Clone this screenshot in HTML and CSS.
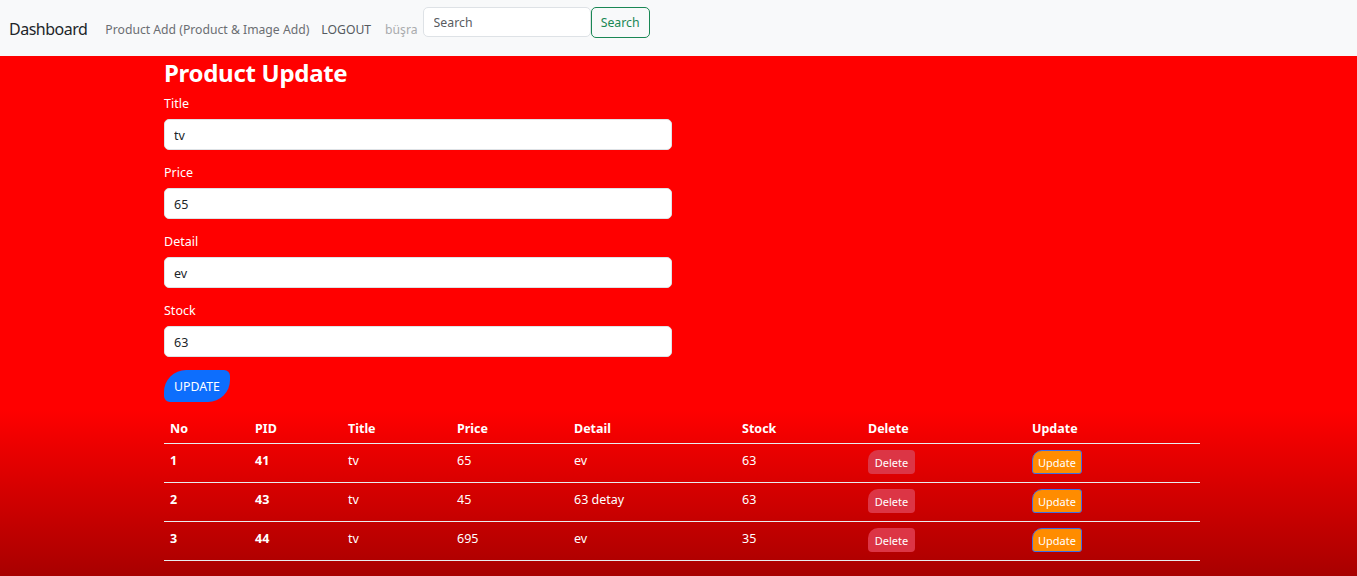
FILE: index.html
```html
<!DOCTYPE html>
<html lang="tr">
<head>
<meta charset="utf-8">
<title>Product Update</title>
<link rel="stylesheet" href="styles.css">
</head>
<body>
<nav class="navbar">
  <a class="brand" href="#">Dashboard</a>
  <a class="nav-link" href="#">Product Add (Product &amp; Image Add)</a>
  <a class="nav-link dark" href="#">LOGOUT</a>
  <span class="nav-link disabled">büşra</span>
  <form class="search">
    <input class="search-input" type="text" placeholder="Search">
    <button class="search-btn" type="button">Search</button>
  </form>
</nav>
<main class="main">
  <div class="container">
    <h2 class="page-title">Product Update</h2>
    <form class="form">
      <div class="group">
        <label class="label">Title</label>
        <input class="field" type="text" value="tv">
      </div>
      <div class="group">
        <label class="label">Price</label>
        <input class="field" type="text" value="65">
      </div>
      <div class="group">
        <label class="label">Detail</label>
        <input class="field" type="text" value="ev">
      </div>
      <div class="group">
        <label class="label">Stock</label>
        <input class="field" type="text" value="63">
      </div>
      <button class="btn-update-main" type="button">UPDATE</button>
    </form>
    <table class="table">
      <colgroup>
        <col class="c-no"><col class="c-pid"><col class="c-title"><col class="c-price">
        <col class="c-detail"><col class="c-stock"><col class="c-delete"><col class="c-update">
      </colgroup>
      <thead>
        <tr><th>No</th><th>PID</th><th>Title</th><th>Price</th><th>Detail</th><th>Stock</th><th>Delete</th><th>Update</th></tr>
      </thead>
      <tbody>
        <tr><th>1</th><th>41</th><td>tv</td><td>65</td><td>ev</td><td>63</td><td><button class="btn-del" type="button">Delete</button></td><td><button class="btn-upd" type="button">Update</button></td></tr>
        <tr><th>2</th><th>43</th><td>tv</td><td>45</td><td>63 detay</td><td>63</td><td><button class="btn-del" type="button">Delete</button></td><td><button class="btn-upd" type="button">Update</button></td></tr>
        <tr><th>3</th><th>44</th><td>tv</td><td>695</td><td>ev</td><td>35</td><td><button class="btn-del" type="button">Delete</button></td><td><button class="btn-upd" type="button">Update</button></td></tr>
      </tbody>
    </table>
  </div>
</main>
</body>
</html>
```
FILE: styles.css
```css
* { box-sizing: border-box; }
html, body { margin: 0; padding: 0; height: 100%; }
body {
  font-family: "Noto Sans", "Open Sans", "DejaVu Sans", sans-serif;
  font-size: 13px;
  color: #212529;
  display: flex;
  flex-direction: column;
  overflow: hidden;
}
.navbar {
  height: 56px;
  flex: 0 0 56px;
  background: #f8f9fa;
  display: flex;
  align-items: center;
  padding-left: 9px;
}
.brand {
  font-size: 16px;
  letter-spacing: -0.5px;
  color: #212529;
  text-decoration: none;
  margin-right: 18px;
  margin-top: 1px;
}
.nav-link {
  font-size: 12.2px;
  color: #6b6e72;
  text-decoration: none;
  margin-right: 12px;
  margin-top: 3px;
}
.nav-link.dark { color: #555a5f; margin-right: 14px; }
.nav-link.disabled { color: #a9abad; margin-right: 5px; }
.search { display: flex; align-items: center; margin-top: -12px; }
.search-input {
  width: 168px;
  height: 30px;
  border: 1px solid #dee2e6;
  border-radius: 5px;
  background: #fff;
  padding: 0 10px;
  font: inherit;
  font-size: 12.3px;
  color: #212529;
}
.search-input::placeholder { color: #595c5f; }
.search-btn {
  width: 59px;
  height: 31px;
  border: 1px solid #198754;
  border-radius: 5px;
  background: transparent;
  color: #198754;
  font: inherit;
  font-size: 12.3px;
  padding: 0;
}
.main {
  flex: 1;
  background: linear-gradient(to bottom, #ff0000 0%, #ff0000 68%, #a80000 100%);
}
.container {
  padding-left: 164px;
  width: 1200px;
}
.page-title {
  margin: 1px 0 6px;
  font-size: 24px;
  letter-spacing: -0.3px;
  line-height: 31px;
  font-weight: 700;
  color: #fff;
}
.form { display: flex; flex-direction: column; align-items: flex-start; }
.group { display: flex; flex-direction: column; margin-bottom: 13px; }
.label {
  color: #fff;
  font-size: 12.5px;
  line-height: 19px;
  margin-bottom: 6px;
}
.field {
  width: 508px;
  height: 31px;
  border: 1px solid #dee2e6;
  border-radius: 5px;
  background: #fff;
  padding: 2px 9px 0;
  font: inherit;
  font-size: 12.5px;
  color: #212529;
}
.btn-update-main {
  height: 32px;
  width: 66px;
  padding: 0;
  border: none;
  background: #0d6efd;
  color: #fff;
  font: inherit;
  font-size: 12.3px;
  border-radius: 22px 6px 22px 6px;
}
.table {
  margin-top: 12px;
  width: 1036px;
  border-collapse: collapse;
  table-layout: fixed;
  color: #fff;
}
.c-no { width: 85px; }
.c-pid { width: 93px; }
.c-title { width: 109px; }
.c-price { width: 117px; }
.c-detail { width: 168px; }
.c-stock { width: 126px; }
.c-delete { width: 164px; }
.c-update { width: 174px; }
.table th, .table td {
  text-align: left;
  padding: 0 6px;
  font-size: 12.5px;
  line-height: 21px;
  border-bottom: 1px solid #e9ecef;
}
.table thead th {
  font-weight: 700;
  height: 29px;
  padding-top: 3px;
  padding-bottom: 3px;
}
.table tbody th { font-weight: 700; }
.table tbody td, .table tbody th { height: 39px; vertical-align: middle; padding-bottom: 4px; }
.table tbody td:nth-child(7), .table tbody td:nth-child(8) { padding-bottom: 1px; }
.btn-del {
  width: 47px;
  height: 24px;
  padding: 0;
  border: none;
  background: #dc3545;
  color: #fff;
  font: inherit;
  font-size: 11px;
  border-radius: 10px 4px 4px 4px;
  vertical-align: middle;
}
.btn-upd {
  width: 50px;
  height: 24px;
  padding: 0;
  border: 1px solid #3c6ee6;
  background: #ff8c00;
  color: #fff;
  font: inherit;
  font-size: 11px;
  border-radius: 10px 3px 3px 3px;
  vertical-align: middle;
}
```
